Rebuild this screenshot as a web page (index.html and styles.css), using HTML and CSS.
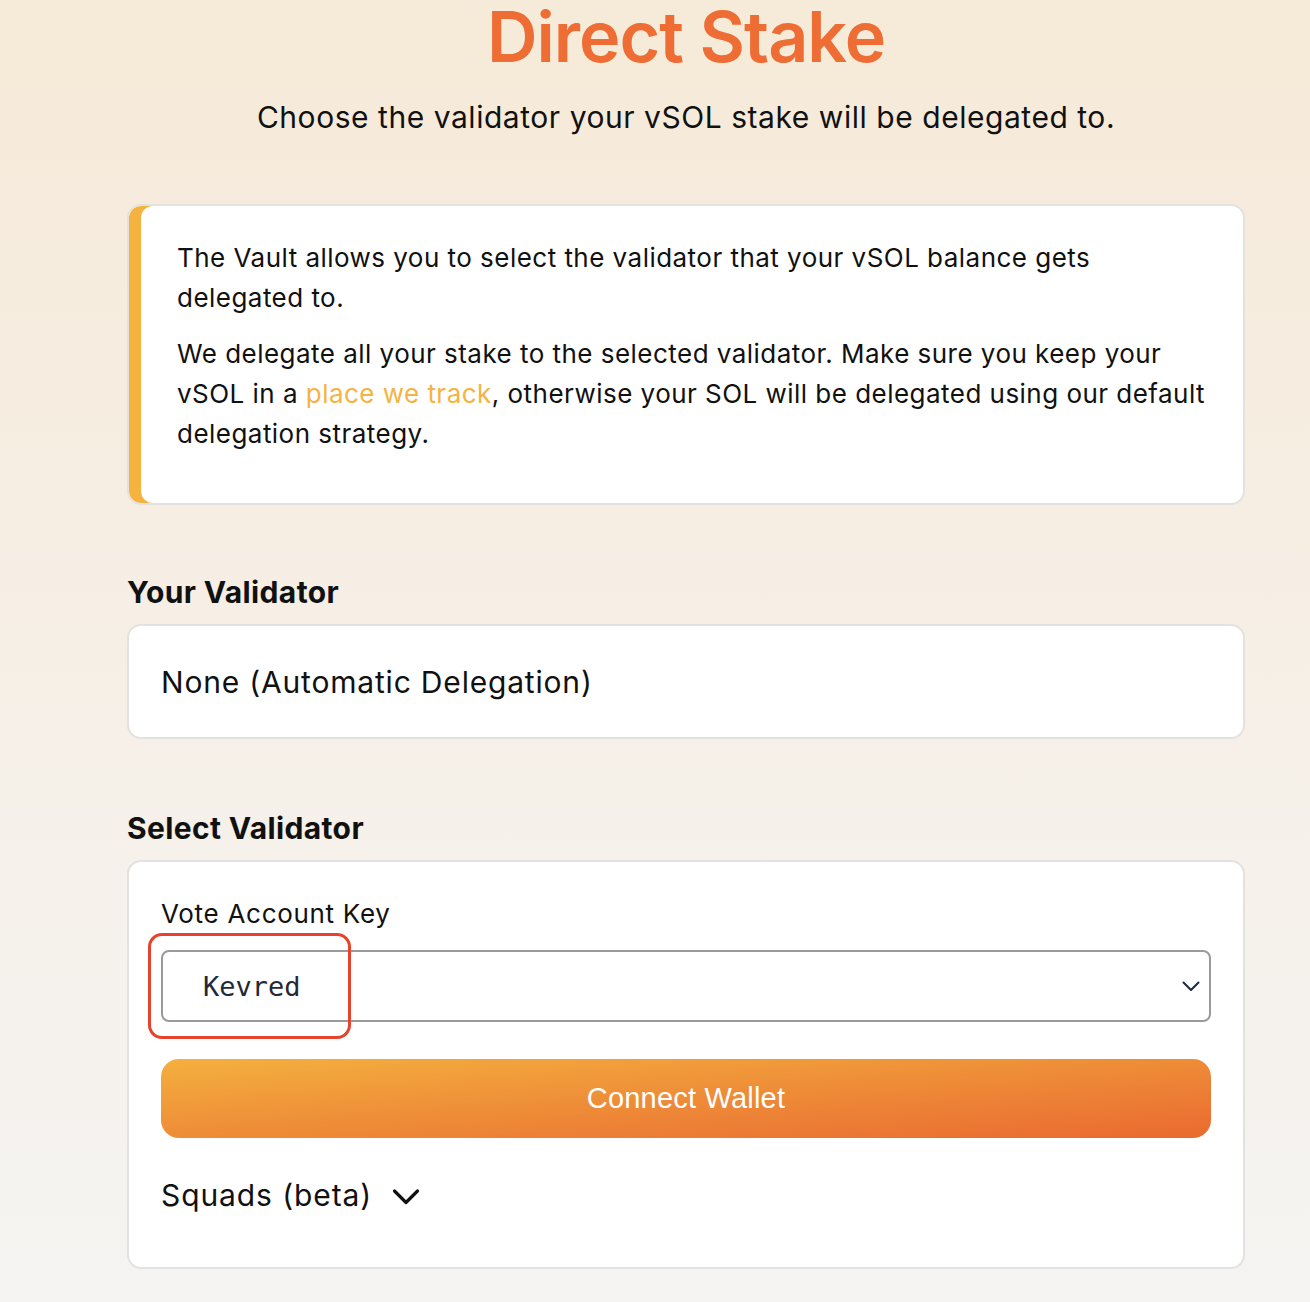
FILE: index.html
```html
<!DOCTYPE html>
<html lang="en">
<head>
<meta charset="utf-8">
<title>Direct Stake</title>
<link rel="stylesheet" href="styles.css">
</head>
<body>
<main class="page">
  <h1 class="title">Direct Stake</h1>
  <p class="subtitle">Choose the validator your vSOL stake will be delegated to.</p>

  <section class="card info">
    <p>The Vault allows you to select the validator that your vSOL balance gets delegated to.</p>
    <p>We delegate all your stake to the selected validator. Make sure you keep your vSOL in a <a class="link" href="#">place we track</a>, otherwise your SOL will be delegated using our default delegation strategy.</p>
  </section>

  <h2 class="section-title first">Your Validator</h2>
  <section class="card current">None (Automatic Delegation)</section>

  <h2 class="section-title second">Select Validator</h2>
  <section class="card select-card">
    <label class="field-label">Vote Account Key</label>
    <div class="select-wrap">
      <div class="select">
        <span class="select-value">Kevred</span>
        <svg class="select-chev" width="18" height="11" viewBox="0 0 18 11"><path d="M1.5 1.5 L9 9 L16.5 1.5" fill="none" stroke="#1f2937" stroke-width="2" stroke-linecap="round" stroke-linejoin="round"/></svg>
      </div>
      <div class="highlight"></div>
    </div>
    <button class="connect">Connect Wallet</button>
    <div class="squads">
      <span>Squads (beta)</span>
      <svg class="squads-chev" width="28" height="18" viewBox="0 0 28 18"><path d="M2.5 3 L14 14.5 L25.5 3" fill="none" stroke="#111" stroke-width="3.2" stroke-linecap="round" stroke-linejoin="round"/></svg>
    </div>
  </section>
</main>
</body>
</html>
```

FILE: styles.css
```css
html, body {
  margin: 0;
  padding: 0;
}
body {
  min-height: 1302px;
  background: linear-gradient(180deg, #f6ead8 0%, #f6efe6 50%, #f5f4f2 100%);
  font-family: Inter, "Open Sans", "DejaVu Sans", sans-serif;
  color: #111;
}
.page {
  width: 1118px;
  margin-left: 127px;
  padding-bottom: 30px;
}
.title {
  margin: 0;
  padding-top: 2px;
  text-align: center;
  font-size: 70px;
  line-height: 70px;
  font-weight: 600;
  color: #ed6d35;
  letter-spacing: -1px;
}
.subtitle {
  margin: 25px 0 0;
  text-align: center;
  font-size: 30px;
  line-height: 40px;
  letter-spacing: 0.018em;
}
.card {
  background: #fff;
  border: 2px solid #e3e2e0;
  border-radius: 14px;
  box-sizing: border-box;
}
.info {
  margin-top: 67px;
  padding: 32px 34px 33px 48px;
  box-shadow: inset 12px 0 0 #f4b23f;
  font-size: 26px;
  line-height: 40px;
  letter-spacing: 0.018em;
}
.info p {
  margin: 0 0 16px;
}
.link {
  color: #f5b342;
  text-decoration: none;
}
.section-title {
  margin: 0 0 12px;
  font-size: 30px;
  line-height: 40px;
  font-weight: 700;
  letter-spacing: 0.012em;
}
.section-title.first {
  margin-top: 67px;
}
.section-title.second {
  margin-top: 69px;
}
.current {
  padding: 36px 32px 35px;
  height: 115px;
  font-size: 30px;
  line-height: 40px;
  letter-spacing: 0.027em;
}
.select-card {
  padding: 34px 32px 52px;
  display: flex;
  flex-direction: column;
}
.field-label {
  font-size: 26px;
  line-height: 36px;
  letter-spacing: 0.027em;
}
.select-wrap {
  position: relative;
  margin-top: 18px;
}
.select {
  height: 72px;
  box-sizing: border-box;
  border: 2px solid #9a9a9a;
  border-radius: 8px;
  display: flex;
  align-items: center;
  justify-content: space-between;
  padding: 0 9px 0 40px;
}
.select-value {
  font-family: "DejaVu Sans Mono", "Liberation Mono", monospace;
  font-size: 27px;
  color: #1f2937;
}
.highlight {
  position: absolute;
  left: -13px;
  top: -17px;
  width: 203px;
  height: 106px;
  box-sizing: border-box;
  border: 3px solid #e5432b;
  border-radius: 14px;
}
.connect {
  margin-top: 37px;
  height: 79px;
  border: none;
  border-radius: 18px;
  background: linear-gradient(to bottom right, #f4b03e 0%, #ee8c38 50%, #ea6a30 100%);
  color: #fff;
  font-family: "Liberation Sans", Arial, sans-serif;
  font-size: 29px;
  letter-spacing: 0.2px;
}
.squads {
  margin-top: 37px;
  display: flex;
  align-items: center;
  gap: 20px;
  font-size: 30px;
  line-height: 40px;
  letter-spacing: 0.03em;
}
.squads-chev {
  margin-top: 4px;
}
```
